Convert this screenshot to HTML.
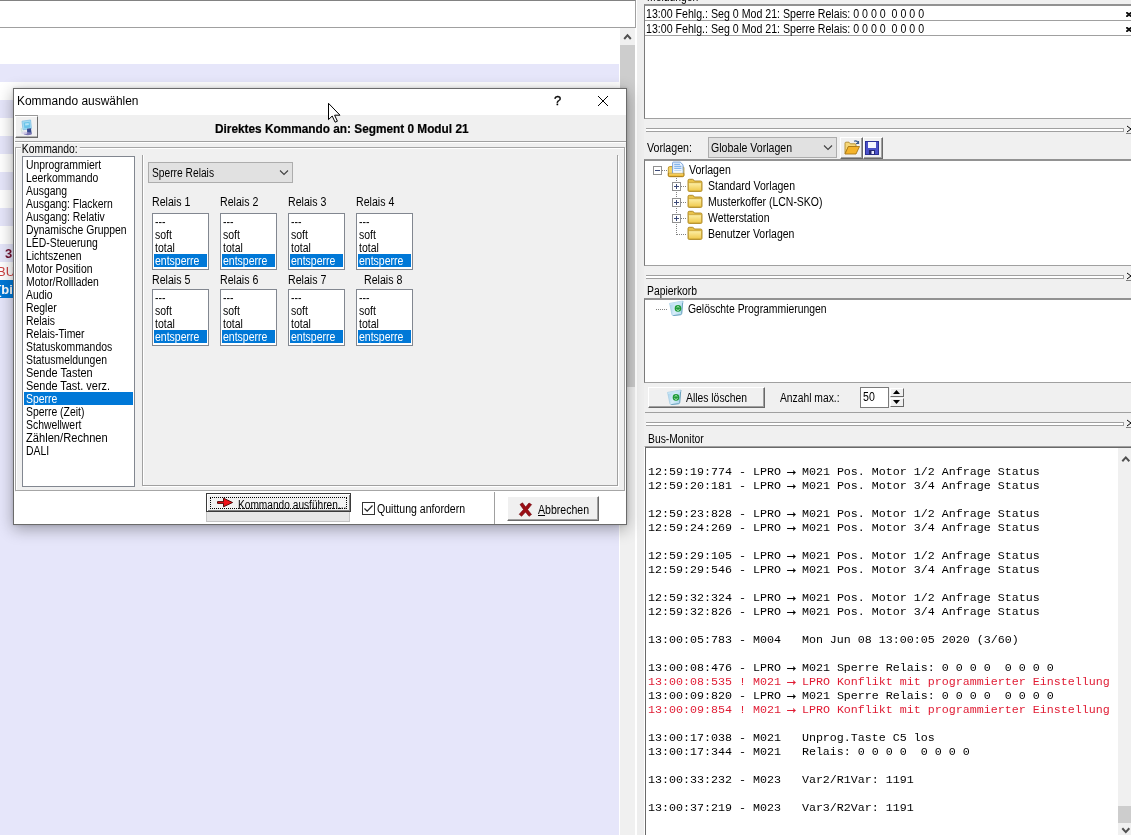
<!DOCTYPE html>
<html>
<head>
<meta charset="utf-8">
<title>Kommando auswählen</title>
<style>
html,body{margin:0;padding:0;}
body{width:1131px;height:835px;overflow:hidden;background:#fff;position:relative;font-family:"Liberation Sans",sans-serif;font-size:11px;color:#000;letter-spacing:-0.3px;}
.a{position:absolute;}
.t{position:absolute;margin-top:1px;white-space:pre;line-height:13px;height:13px;font-size:12px;letter-spacing:0;transform:scaleX(var(--sx,0.867));transform-origin:0 0;}
.lav{position:absolute;left:0;width:619px;background:#e6e6fa;}
.box{position:absolute;background:#fff;border:1px solid #828790;box-sizing:border-box;}
.hl{position:absolute;height:1px;background:#a0a0a0;}
.vl{position:absolute;width:1px;background:#a0a0a0;}
.split{position:absolute;left:646px;width:478px;height:4px;box-sizing:border-box;border:1px solid #a0a0a0;border-left:none;background:#fff;}
.btn{position:absolute;box-sizing:border-box;background:#f0f0f0;border:1px solid;border-color:#fff #696969 #696969 #fff;box-shadow:inset -1px -1px 0 #a0a0a0;}
.combo{position:absolute;box-sizing:border-box;background:#e1e1e1;border:1px solid #adadad;}
.mono{font-family:"Liberation Mono",monospace;font-size:11.667px;letter-spacing:0;line-height:14px;white-space:pre;color:#000;}
.red{color:#e01c34;}
.ar{display:inline-block;width:7px;font-weight:normal;transform:scale(1.2,1.3) translateY(-0.5px);transform-origin:50% 55%;-webkit-text-stroke:0.35px currentColor;}
.li{position:absolute;margin-top:1px;left:2px;white-space:pre;line-height:13px;height:13px;font-size:12px;letter-spacing:0;transform:scaleX(0.867);transform-origin:0 0;}
.rl{position:absolute;width:57px;height:57px;box-sizing:border-box;border:1px solid #828790;background:#fff;}
.rl span{position:absolute;left:2px;line-height:13px;height:13px;white-space:pre;font-size:12px;letter-spacing:0;transform:scaleX(0.875);transform-origin:0 0;}
.rl i{position:absolute;left:1px;top:40px;width:53px;height:13px;background:#0078d7;}
</style>
</head>
<body>
<div id="root" style="position:absolute;left:0;top:0;width:1131px;height:835px;overflow:hidden;will-change:transform;">

<!-- ================= LEFT PANE BACKGROUND ================= -->
<div class="a" id="topbox" style="left:-2px;top:0;width:638px;height:28px;box-sizing:border-box;border:1px solid #a0a0a0;border-top-color:#828282;background:#fff;"></div>
<div class="lav" style="top:64px;height:18px;"></div>
<div class="lav" style="top:100px;height:18px;"></div>
<div class="lav" style="top:136px;height:18px;"></div>
<div class="lav" style="top:172px;height:18px;"></div>
<div class="lav" style="top:208px;height:18px;"></div>
<div class="lav" style="top:244px;height:18px;"></div>
<div class="lav" style="top:298px;height:537px;"></div>
<div class="a" style="left:0;top:280px;width:14px;height:18px;background:#0078d7;"></div>
<div class="t" style="--sx:1;left:5px;top:246px;font-weight:bold;font-size:13px;color:#701030;letter-spacing:0;">3</div>
<div class="t" style="--sx:1;left:-3px;top:264px;font-size:13px;color:#cc4040;letter-spacing:0;">BU</div>
<div class="t" style="--sx:1;left:-3px;top:282px;font-weight:bold;font-size:13px;color:#fff;letter-spacing:0;">[bi</div>

<!-- left scrollbar -->
<div class="a" id="lsb" style="left:620px;top:28px;width:15px;height:807px;background:#f0f0f0;"></div>
<div class="a" style="left:620px;top:45px;width:15px;height:342px;background:#cdcdcd;"></div>
<svg class="a" style="left:620px;top:28px" width="15" height="17" viewBox="0 0 15 17"><path d="M4.2 11 L7.5 7.2 L10.8 11" fill="none" stroke="#505050" stroke-width="2"/></svg>
<!-- vertical splitter -->
<div class="a" style="left:635px;top:28px;width:2px;height:807px;background:#fff;"></div>
<div class="a" style="left:637px;top:0;width:8px;height:835px;background:#eeeeee;"></div>
<div class="a" style="left:636px;top:0;width:1px;height:28px;background:#fff;"></div>

<!-- ================= RIGHT PANE ================= -->
<div class="a" id="rpane" style="left:644px;top:0;width:487px;height:835px;background:#f0f0f0;"></div>

<!-- Meldungen -->
<div class="t" style="--sx:0.863;left:647px;top:-10px;">Meldungen</div>
<div class="box" style="left:644px;top:4px;width:500px;height:115px;border-color:#929292 #a0a0a0 #a0a0a0 #7a7a7a;border-top-width:2px;"></div>
<div class="hl" style="left:645px;top:20px;width:486px;"></div>
<div class="hl" style="left:645px;top:35px;width:486px;"></div>
<div class="t" style="--sx:0.885;left:646px;top:7px;">13:00 Fehlg.: Seg 0 Mod 21: Sperre Relais: 0 0 0 0  0 0 0 0</div>
<div class="t" style="--sx:0.885;left:646px;top:22px;">13:00 Fehlg.: Seg 0 Mod 21: Sperre Relais: 0 0 0 0  0 0 0 0</div>
<svg class="a" style="left:1126px;top:12px" width="6" height="5" viewBox="0 0 6 5"><path d="M0.3 0.2 L5.7 4.8 M5.7 0.2 L0.3 4.8" stroke="#111" stroke-width="1.9"/></svg>
<svg class="a" style="left:1126px;top:27px" width="6" height="5" viewBox="0 0 6 5"><path d="M0.3 0.2 L5.7 4.8 M5.7 0.2 L0.3 4.8" stroke="#111" stroke-width="1.9"/></svg>

<!-- splitter 1 -->
<div class="split" style="top:128px;"></div>
<svg class="a" style="left:1126px;top:125px" width="6" height="9" viewBox="0 0 6 9"><path d="M1 1 L5 4 L1 7" fill="none" stroke="#000" stroke-width="1"/><path d="M0 8.5 H6" stroke="#808080" stroke-width="1"/></svg>

<!-- Vorlagen row -->
<div class="t" style="--sx:0.887;left:647px;top:141px;">Vorlagen:</div>
<div class="combo" style="left:708px;top:137px;width:129px;height:21px;"></div>
<div class="t" style="--sx:0.880;left:711px;top:141px;">Globale Vorlagen</div>
<svg class="a" style="left:823px;top:144px" width="10" height="7" viewBox="0 0 10 7"><path d="M1 1.5 L5 5.5 L9 1.5" fill="none" stroke="#404040" stroke-width="1.1"/></svg>
<div class="btn" style="left:840px;top:137px;width:23px;height:22px;"></div>
<div class="btn" style="left:863px;top:137px;width:20px;height:22px;"></div>
<!-- open folder icon -->
<svg class="a" style="left:844px;top:140px" width="16" height="15" viewBox="0 0 16 15">
 <path d="M1 13.5 V3.2 Q1 2.2 2 2.2 H5 L6.3 3.8 H11 Q12 3.8 12 4.8 V6.5 H4.5 L1 13.5 Z" fill="#f6d77a" stroke="#b08a2c" stroke-width="0.9"/>
 <path d="M1 14 L4.3 6.5 H15.5 L12 14 Z" fill="#f4b32a" stroke="#a87716" stroke-width="0.9"/>
 <path d="M10 1.2 Q13 0.2 14.2 3 M14.5 1 V3.5 H12" fill="none" stroke="#3a5a8c" stroke-width="1.2"/>
</svg>
<!-- save icon -->
<svg class="a" style="left:865px;top:141px" width="14" height="14" viewBox="0 0 14 14">
 <rect x="0.5" y="0.5" width="13" height="13" fill="#4a50c8" stroke="#2a2f96"/>
 <rect x="3" y="1" width="8" height="6" fill="#f4f6ff"/>
 <rect x="4" y="9" width="6" height="4.5" fill="#23266e"/>
 <rect x="6.5" y="10" width="2.5" height="3" fill="#e8eaff"/>
</svg>

<!-- Vorlagen tree -->
<div class="box" style="left:644px;top:159px;width:500px;height:107px;border-color:#929292 #a0a0a0 #a0a0a0 #7a7a7a;border-top-width:2px;"></div>
<!-- tree lines (dotted) -->
<div class="a" style="left:662px;top:170px;width:6px;height:1px;background:repeating-linear-gradient(90deg,#808080 0 1px,transparent 1px 2px);"></div>
<div class="a" style="left:676px;top:178px;width:1px;height:57px;background:repeating-linear-gradient(180deg,#808080 0 1px,transparent 1px 2px);"></div>
<div class="a" style="left:681px;top:186px;width:6px;height:1px;background:repeating-linear-gradient(90deg,#808080 0 1px,transparent 1px 2px);"></div>
<div class="a" style="left:681px;top:202px;width:6px;height:1px;background:repeating-linear-gradient(90deg,#808080 0 1px,transparent 1px 2px);"></div>
<div class="a" style="left:681px;top:218px;width:6px;height:1px;background:repeating-linear-gradient(90deg,#808080 0 1px,transparent 1px 2px);"></div>
<div class="a" style="left:677px;top:234px;width:10px;height:1px;background:repeating-linear-gradient(90deg,#808080 0 1px,transparent 1px 2px);"></div>
<!-- expand boxes -->
<svg class="a" style="left:653px;top:166px" width="9" height="9" viewBox="0 0 9 9"><rect x="0.5" y="0.5" width="8" height="8" fill="#fff" stroke="#919191"/><path d="M2 4.5 H7" stroke="#3c4a78" stroke-width="1"/></svg>
<svg class="a" style="left:672px;top:182px" width="9" height="9" viewBox="0 0 9 9"><rect x="0.5" y="0.5" width="8" height="8" fill="#fff" stroke="#919191"/><path d="M2 4.5 H7 M4.5 2 V7" stroke="#3c4a78" stroke-width="1"/></svg>
<svg class="a" style="left:672px;top:198px" width="9" height="9" viewBox="0 0 9 9"><rect x="0.5" y="0.5" width="8" height="8" fill="#fff" stroke="#919191"/><path d="M2 4.5 H7 M4.5 2 V7" stroke="#3c4a78" stroke-width="1"/></svg>
<svg class="a" style="left:672px;top:214px" width="9" height="9" viewBox="0 0 9 9"><rect x="0.5" y="0.5" width="8" height="8" fill="#fff" stroke="#919191"/><path d="M2 4.5 H7 M4.5 2 V7" stroke="#3c4a78" stroke-width="1"/></svg>
<!-- root icon: folder w/ page -->
<svg class="a" style="left:667px;top:161px" width="18" height="17" viewBox="0 0 18 17">
 <rect x="1.3" y="5.6" width="15.6" height="10" rx="1.4" fill="#f4d466" stroke="#b98f24" stroke-width="0.9"/>
 <path d="M5.6 13 V2 Q5.6 1.1 6.5 1.1 H13.2 L16 3.8 V13 Z" fill="#eaf3fe" stroke="#6f9bd6" stroke-width="0.9"/>
 <path d="M7.2 3.4 H13 M7.2 5.4 H14.4 M7.2 7.4 H14.4" stroke="#86b6ec" stroke-width="1.1"/>
 <rect x="6.4" y="8.6" width="9" height="3.6" fill="#f8fbff"/>
 <path d="M7.2 9.6 H14.4" stroke="#b6d3f3" stroke-width="1"/>
 <path d="M1.3 12.4 H16.9 V14.3 Q16.9 15.6 15.6 15.6 H2.6 Q1.3 15.6 1.3 14.3 Z" fill="#efbf3e" stroke="#a87b18" stroke-width="0.9"/>
 <path d="M2 12.9 H16.2" stroke="#fbe7a0" stroke-width="0.8"/>
</svg>
<!-- folder icons -->
<svg class="a fol" style="left:687px;top:178px" width="16" height="14" viewBox="0 0 16 14"><use href="#fold"/></svg>
<svg class="a fol" style="left:687px;top:194px" width="16" height="14" viewBox="0 0 16 14"><use href="#fold"/></svg>
<svg class="a fol" style="left:687px;top:210px" width="16" height="14" viewBox="0 0 16 14"><use href="#fold"/></svg>
<svg class="a fol" style="left:687px;top:226px" width="16" height="14" viewBox="0 0 16 14"><use href="#fold"/></svg>
<svg width="0" height="0" style="position:absolute"><defs>
 <linearGradient id="fg" x1="0" y1="0" x2="0" y2="1"><stop offset="0" stop-color="#fdf0a8"/><stop offset="1" stop-color="#f0c94c"/></linearGradient>
 <g id="fold">
  <path d="M1 12.2 V2.6 Q1 1.3 2.3 1.3 H5.4 Q6.3 1.3 6.8 2.1 L7.4 3 H13.6 Q15 3 15 4.4 V12.2 Q15 13.4 13.7 13.4 H2.3 Q1 13.4 1 12.2 Z" fill="#e9c24a" stroke="#a9831f" stroke-width="0.9"/>
  <path d="M1.5 12 V5.6 Q1.5 4.7 2.5 4.7 H13.5 Q14.5 4.7 14.5 5.6 V12 Q14.5 12.9 13.5 12.9 H2.5 Q1.5 12.9 1.5 12 Z" fill="url(#fg)" stroke="#b8922a" stroke-width="0.6"/>
 </g>
 <linearGradient id="bg" x1="0" y1="0" x2="1" y2="0.3"><stop offset="0" stop-color="#9fcdeb"/><stop offset="0.55" stop-color="#d8eef9"/><stop offset="1" stop-color="#b5dcf0"/></linearGradient>
 <g id="bin">
  <path d="M1.6 3.4 L14.8 1 L13.7 13.4 Q13.6 14.5 12.5 14.7 L5.2 15.6 Q4.1 15.7 3.9 14.6 Z" fill="url(#bg)" stroke="#a3cbe2" stroke-width="0.7"/>
  <path d="M14.8 1 L13.7 13.4 Q13.6 14.5 12.5 14.7 L5.2 15.6" fill="none" stroke="#6da4bf" stroke-width="1"/>
  <path d="M1.6 3.4 L14.8 1 L14.5 3 L2 5.2 Z" fill="#c6e4f5" opacity="0.9"/>
  <circle cx="10" cy="8.4" r="3.3" fill="#1d9a38"/>
  <path d="M8.6 7.6 L10 6.4 L11.4 7.6 M11.6 9.4 L10 10.6 L8.4 9.4" fill="none" stroke="#c9f2cf" stroke-width="0.9"/>
 </g>
</defs></svg>
<div class="t" style="--sx:0.882;left:689px;top:163px;">Vorlagen</div>
<div class="t" style="--sx:0.875;left:708px;top:179px;">Standard Vorlagen</div>
<div class="t" style="--sx:0.873;left:708px;top:195px;">Musterkoffer (LCN-SKO)</div>
<div class="t" style="--sx:0.872;left:708px;top:211px;">Wetterstation</div>
<div class="t" style="--sx:0.875;left:708px;top:227px;">Benutzer Vorlagen</div>

<!-- splitter 2 -->
<div class="split" style="top:275px;"></div>
<svg class="a" style="left:1126px;top:272px" width="6" height="9" viewBox="0 0 6 9"><path d="M1 1 L5 4 L1 7" fill="none" stroke="#000" stroke-width="1"/><path d="M0 8.5 H6" stroke="#808080" stroke-width="1"/></svg>

<!-- Papierkorb -->
<div class="t" style="--sx:0.862;left:647px;top:284px;">Papierkorb</div>
<div class="box" style="left:644px;top:298px;width:500px;height:85px;border-color:#929292 #a0a0a0 #a0a0a0 #7a7a7a;border-top-width:2px;"></div>
<div class="a" style="left:656px;top:309px;width:12px;height:1px;background:repeating-linear-gradient(90deg,#808080 0 1px,transparent 1px 2px);"></div>
<svg class="a" style="left:668px;top:300px" width="16" height="16" viewBox="0 0 16 16"><use href="#bin"/></svg>
<div class="t" style="--sx:0.866;left:688px;top:302px;">Gelöschte Programmierungen</div>

<div class="btn" style="left:648px;top:387px;width:117px;height:21px;"></div>
<svg class="a" style="left:666px;top:389px" width="16" height="16" viewBox="0 0 16 16"><use href="#bin"/></svg>
<div class="t" style="--sx:0.863;left:686px;top:391px;">Alles löschen</div>
<div class="t" style="--sx:0.858;left:780px;top:391px;">Anzahl max.:</div>
<div class="box" style="left:860px;top:387px;width:29px;height:21px;border-color:#7a7a7a;"></div>
<div class="t" style="--sx:0.882;left:863px;top:390px;letter-spacing:0;">50</div>
<div class="btn" style="left:890px;top:388px;width:14px;height:9px;border-color:#fff #696969 #696969 #fff;box-shadow:none;"></div>
<div class="btn" style="left:890px;top:398px;width:14px;height:9px;border-color:#fff #696969 #696969 #fff;box-shadow:none;"></div>
<svg class="a" style="left:893px;top:390px" width="7" height="4" viewBox="0 0 7 4"><path d="M0 4 L3.5 0 L7 4 Z" fill="#000"/></svg>
<svg class="a" style="left:893px;top:400px" width="7" height="4" viewBox="0 0 7 4"><path d="M0 0 L3.5 4 L7 0 Z" fill="#000"/></svg>

<div class="hl" style="left:645px;top:412px;width:486px;"></div>
<!-- splitter 3 -->
<div class="split" style="top:422px;"></div>
<svg class="a" style="left:1126px;top:419px" width="6" height="9" viewBox="0 0 6 9"><path d="M1 1 L5 4 L1 7" fill="none" stroke="#000" stroke-width="1"/><path d="M0 8.5 H6" stroke="#808080" stroke-width="1"/></svg>
<!-- Bus-Monitor -->
<div class="t" style="--sx:0.861;left:648px;top:432px;">Bus-Monitor</div>
<div class="a" style="left:644px;top:446px;width:500px;height:400px;box-sizing:border-box;border:1px solid #a0a0a0;border-left-color:#fff;background:#fff;"></div>
<div class="a" style="left:645px;top:447px;width:500px;height:400px;box-sizing:border-box;border:1px solid #696969;background:#fff;"></div>
<div class="a" style="left:1118px;top:448px;width:13px;height:387px;background:#f0f0f0;"></div>
<div class="a" style="left:1118px;top:806px;width:13px;height:17px;background:#cdcdcd;"></div>
<svg class="a" style="left:1118px;top:452px" width="13" height="12" viewBox="0 0 13 12"><path d="M4.3 9.2 L7.8 5.4 L11.3 9.2" fill="none" stroke="#505050" stroke-width="2"/></svg>
<svg class="a" style="left:1118px;top:824px" width="13" height="11" viewBox="0 0 13 11"><path d="M4.3 4.3 L7.8 8.1 L11.3 4.3" fill="none" stroke="#505050" stroke-width="2"/></svg>
<div class="a mono" style="left:648px;top:465px;">12:59:19:774 - LPRO <b class="ar">→</b> M021 Pos. Motor 1/2 Anfrage Status
12:59:20:181 - LPRO <b class="ar">→</b> M021 Pos. Motor 3/4 Anfrage Status

12:59:23:828 - LPRO <b class="ar">→</b> M021 Pos. Motor 1/2 Anfrage Status
12:59:24:269 - LPRO <b class="ar">→</b> M021 Pos. Motor 3/4 Anfrage Status

12:59:29:105 - LPRO <b class="ar">→</b> M021 Pos. Motor 1/2 Anfrage Status
12:59:29:546 - LPRO <b class="ar">→</b> M021 Pos. Motor 3/4 Anfrage Status

12:59:32:324 - LPRO <b class="ar">→</b> M021 Pos. Motor 1/2 Anfrage Status
12:59:32:826 - LPRO <b class="ar">→</b> M021 Pos. Motor 3/4 Anfrage Status

13:00:05:783 - M004   Mon Jun 08 13:00:05 2020 (3/60)

13:00:08:476 - LPRO <b class="ar">→</b> M021 Sperre Relais: 0 0 0 0  0 0 0 0
<span class="red">13:00:08:535 ! M021 <b class="ar">→</b> LPRO Konflikt mit programmierter Einstellung</span>
13:00:09:820 - LPRO <b class="ar">→</b> M021 Sperre Relais: 0 0 0 0  0 0 0 0
<span class="red">13:00:09:854 ! M021 <b class="ar">→</b> LPRO Konflikt mit programmierter Einstellung</span>

13:00:17:038 - M021   Unprog.Taste C5 los
13:00:17:344 - M021   Relais: 0 0 0 0  0 0 0 0

13:00:33:232 - M023   Var2/R1Var: 1191

13:00:37:219 - M023   Var3/R2Var: 1191</div>


<!-- ================= DIALOG ================= -->
<div class="a" id="dlg" style="left:13px;top:88px;width:614px;height:437px;box-sizing:border-box;border:1px solid #6b6b6b;background:#f0f0f0;box-shadow:0 4px 15px rgba(0,0,0,0.33), 0 0 3px rgba(0,0,0,0.15);"></div>
<div class="a" style="left:14px;top:89px;width:612px;height:26px;background:#fff;"></div>
<div class="t" id="dtitle" style="--sx:0.995;left:17px;top:93px;font-size:12px;letter-spacing:0;line-height:14px;height:14px;">Kommando auswählen</div>
<div class="t" style="--sx:1;left:554px;top:93px;font-size:13px;letter-spacing:0;line-height:14px;height:14px;-webkit-text-stroke:0.3px #000;">?</div>
<svg class="a" style="left:597px;top:95px" width="12" height="12" viewBox="0 0 12 12"><path d="M1 1 L11 11 M11 1 L1 11" stroke="#000" stroke-width="1"/></svg>

<!-- icon button -->
<div class="hl" style="left:15px;top:115px;width:23px;background:#9a9a9a;"></div>
<div class="btn" style="left:15px;top:116px;width:23px;height:22px;box-shadow:inset 0 -1px 0 #b4b4b4;"></div>
<svg class="a" style="left:19px;top:119px" width="16" height="17" viewBox="0 0 16 17">
 <defs><filter id="bl" x="-20%" y="-20%" width="140%" height="140%"><feGaussianBlur stdDeviation="0.45"/></filter></defs>
 <g filter="url(#bl)">
 <path d="M3 2.2 L11.6 1 L12.4 9.6 L4 10.8 Z" fill="#a6ddf2" stroke="#7fbfe4" stroke-width="0.8"/>
 <path d="M4.6 3.6 L10.6 2.8 L11.2 8.6 L5.3 9.4 Z" fill="#6cc4ea"/>
 <path d="M6 4.4 L9.6 3.9 L9.9 6 L6.3 6.6 Z" fill="#c4ecfa" opacity="0.8"/>
 <path d="M8 9.8 L12 9.2 L12.6 14 L8.2 14.6 Z" fill="#34488f"/>
 <ellipse cx="8.8" cy="14.6" rx="4.2" ry="1.7" fill="#7c78b4"/>
 <ellipse cx="5.2" cy="13.8" rx="3" ry="1.5" fill="#d9d4ec" opacity="0.8"/>
 <path d="M2.4 9 Q1.6 11.6 3.4 13.4" fill="none" stroke="#cfe6d8" stroke-width="1.3"/>
 </g>
</svg>
<div class="t" id="dhead" style="-webkit-text-stroke:0.2px #000;--sx:0.985;left:215px;top:121px;font-size:12px;font-weight:bold;letter-spacing:0;line-height:14px;height:14px;">Direktes Kommando an: Segment 0 Modul 21</div>
<div class="hl" style="left:14px;top:141px;width:612px;"></div>
<div class="hl" style="left:14px;top:142px;width:612px;background:#fff;"></div>

<!-- group box -->
<div class="a" style="left:15px;top:147px;width:610px;height:344px;box-sizing:border-box;border:1px solid #a6a6a6;box-shadow:inset 1px 1px 0 #fff, 1px 1px 0 #fff;"></div>
<div class="a" style="left:14px;top:115px;width:1px;height:409px;background:#fff;"></div>
<div class="t" style="--sx:0.863;left:21px;top:142px;padding:0 2px 0 1px;background:#f0f0f0;">Kommando:</div>

<!-- command list -->
<div class="box" id="cmdlist" style="left:22px;top:156px;width:113px;height:331px;">
 <div class="a" style="left:1px;top:235px;width:109px;height:13px;background:#0078d7;"></div>
 <div class="li" style="top:1px;left:3px;">Unprogrammiert</div>
 <div class="li" style="top:14px;left:3px;">Leerkommando</div>
 <div class="li" style="top:27px;left:3px;">Ausgang</div>
 <div class="li" style="top:40px;left:3px;">Ausgang: Flackern</div>
 <div class="li" style="top:53px;left:3px;">Ausgang: Relativ</div>
 <div class="li" style="top:66px;left:3px;">Dynamische Gruppen</div>
 <div class="li" style="top:79px;left:3px;">LED-Steuerung</div>
 <div class="li" style="top:92px;left:3px;">Lichtszenen</div>
 <div class="li" style="top:105px;left:3px;">Motor Position</div>
 <div class="li" style="top:118px;left:3px;">Motor/Rollladen</div>
 <div class="li" style="top:131px;left:3px;">Audio</div>
 <div class="li" style="top:144px;left:3px;">Regler</div>
 <div class="li" style="top:157px;left:3px;">Relais</div>
 <div class="li" style="top:170px;left:3px;">Relais-Timer</div>
 <div class="li" style="top:183px;left:3px;">Statuskommandos</div>
 <div class="li" style="top:196px;left:3px;">Statusmeldungen</div>
 <div class="li" style="top:209px;left:3px;transform:scaleX(0.91);">Sende Tasten</div>
 <div class="li" style="top:222px;left:3px;transform:scaleX(0.908);">Sende Tast. verz.</div>
 <div class="li" style="top:235px;left:3px;color:#fff;">Sperre</div>
 <div class="li" style="top:248px;left:3px;">Sperre (Zeit)</div>
 <div class="li" style="top:261px;left:3px;">Schwellwert</div>
 <div class="li" style="top:274px;left:3px;transform:scaleX(0.928);">Zählen/Rechnen</div>
 <div class="li" style="top:287px;left:3px;">DALI</div>
</div>

<!-- inner panel -->
<div class="a" style="left:142px;top:155px;width:476px;height:331px;box-sizing:border-box;border:1px solid #a0a0a0;border-top:none;box-shadow:inset 1px 0 0 #fff, 1px 1px 0 #fff;"></div>

<div class="combo" style="left:148px;top:162px;width:145px;height:21px;"></div>
<div class="t" style="--sx:0.853;left:152px;top:166px;">Sperre Relais</div>
<svg class="a" style="left:279px;top:169px" width="10" height="7" viewBox="0 0 10 7"><path d="M1 1.5 L5 5.5 L9 1.5" fill="none" stroke="#404040" stroke-width="1.1"/></svg>

<div class="t" style="--sx:0.885;left:152px;top:195px;">Relais 1</div>
<div class="t" style="--sx:0.885;left:220px;top:195px;">Relais 2</div>
<div class="t" style="--sx:0.885;left:288px;top:195px;">Relais 3</div>
<div class="t" style="--sx:0.885;left:356px;top:195px;">Relais 4</div>
<div class="t" style="--sx:0.885;left:152px;top:273px;">Relais 5</div>
<div class="t" style="--sx:0.885;left:220px;top:273px;">Relais 6</div>
<div class="t" style="--sx:0.885;left:288px;top:273px;">Relais 7</div>
<div class="t" style="--sx:0.885;left:364px;top:273px;">Relais 8</div>

<div class="rl" style="left:152px;top:213px;"><i></i><span style="top:2px">---</span><span style="top:15px">soft</span><span style="top:28px">total</span><span style="top:41px;color:#fff">entsperre</span></div>
<div class="rl" style="left:220px;top:213px;"><i></i><span style="top:2px">---</span><span style="top:15px">soft</span><span style="top:28px">total</span><span style="top:41px;color:#fff">entsperre</span></div>
<div class="rl" style="left:288px;top:213px;"><i></i><span style="top:2px">---</span><span style="top:15px">soft</span><span style="top:28px">total</span><span style="top:41px;color:#fff">entsperre</span></div>
<div class="rl" style="left:356px;top:213px;"><i></i><span style="top:2px">---</span><span style="top:15px">soft</span><span style="top:28px">total</span><span style="top:41px;color:#fff">entsperre</span></div>
<div class="rl" style="left:152px;top:289px;"><i></i><span style="top:2px">---</span><span style="top:15px">soft</span><span style="top:28px">total</span><span style="top:41px;color:#fff">entsperre</span></div>
<div class="rl" style="left:220px;top:289px;"><i></i><span style="top:2px">---</span><span style="top:15px">soft</span><span style="top:28px">total</span><span style="top:41px;color:#fff">entsperre</span></div>
<div class="rl" style="left:288px;top:289px;"><i></i><span style="top:2px">---</span><span style="top:15px">soft</span><span style="top:28px">total</span><span style="top:41px;color:#fff">entsperre</span></div>
<div class="rl" style="left:356px;top:289px;"><i></i><span style="top:2px">---</span><span style="top:15px">soft</span><span style="top:28px">total</span><span style="top:41px;color:#fff">entsperre</span></div>

<!-- bottom bar -->
<div class="a" style="left:14px;top:492px;width:612px;height:32px;background:#fff;"></div>
<div class="a" style="left:206px;top:512px;width:144px;height:10px;background:#e6e6e6;border:1px solid #c4c4c4;border-top:none;box-sizing:border-box;"></div>
<div class="a" style="left:206px;top:493px;width:145px;height:19px;box-sizing:border-box;border:1px solid #3a3a3a;background:#f2f2f2;box-shadow:inset 1px 1px 0 #fff, inset -1px -1px 0 #808080;"></div>
<div class="a" style="left:210px;top:497px;width:137px;height:12px;box-sizing:border-box;border:1px dotted #000;"></div>
<svg class="a" style="left:217px;top:497px" width="17" height="11" viewBox="0 0 17 11"><path d="M0.5 4.6 H6.5 V1.2 L15.6 5.5 L6.5 9.8 V6.4 H0.5 Z" fill="#f01018" stroke="#400000" stroke-width="0.9"/></svg>
<div class="t" style="--sx:0.846;left:238px;top:498px;">Kommando ausführen...</div>

<div class="a" style="left:362px;top:502px;width:13px;height:13px;box-sizing:border-box;border:1px solid #333;background:#fff;"></div>
<svg class="a" style="left:363px;top:503px" width="11" height="11" viewBox="0 0 11 11"><path d="M1.5 5.5 L4.2 8.2 L9.5 2.5" fill="none" stroke="#222" stroke-width="1.2"/></svg>
<div class="t" style="--sx:0.880;left:377px;top:502px;">Quittung anfordern</div>

<div class="vl" style="left:494px;top:492px;height:32px;"></div>
<div class="vl" style="left:495px;top:492px;height:32px;background:#fff;"></div>
<div class="btn" style="left:507px;top:496px;width:92px;height:25px;"></div>
<svg class="a" style="left:518px;top:502px" width="15" height="15" viewBox="0 0 15 15"><path d="M2 2.5 L4.5 0.8 L7.6 5 L11 1 L13.6 2.6 L9.6 7.6 L13.5 12.5 L11 14.3 L7.5 10 L3.6 14.3 L1.2 12.3 L5.5 7.5 Z" fill="#9b0f16" stroke="#6e0008" stroke-width="0.6"/></svg>
<div class="t" style="--sx:0.879;left:538px;top:503px;"><u>A</u>bbrechen</div>

<!-- mouse cursor -->
<svg class="a" style="left:327px;top:102px" width="14" height="21" viewBox="0 0 14 21"><path d="M1.5 1.3 V17.6 L5.2 14 L8.1 20.2 L10.4 19.2 L7.6 13.2 H13 Z" fill="#fff" stroke="#000" stroke-width="1"/></svg>


</div>
</body>
</html>
